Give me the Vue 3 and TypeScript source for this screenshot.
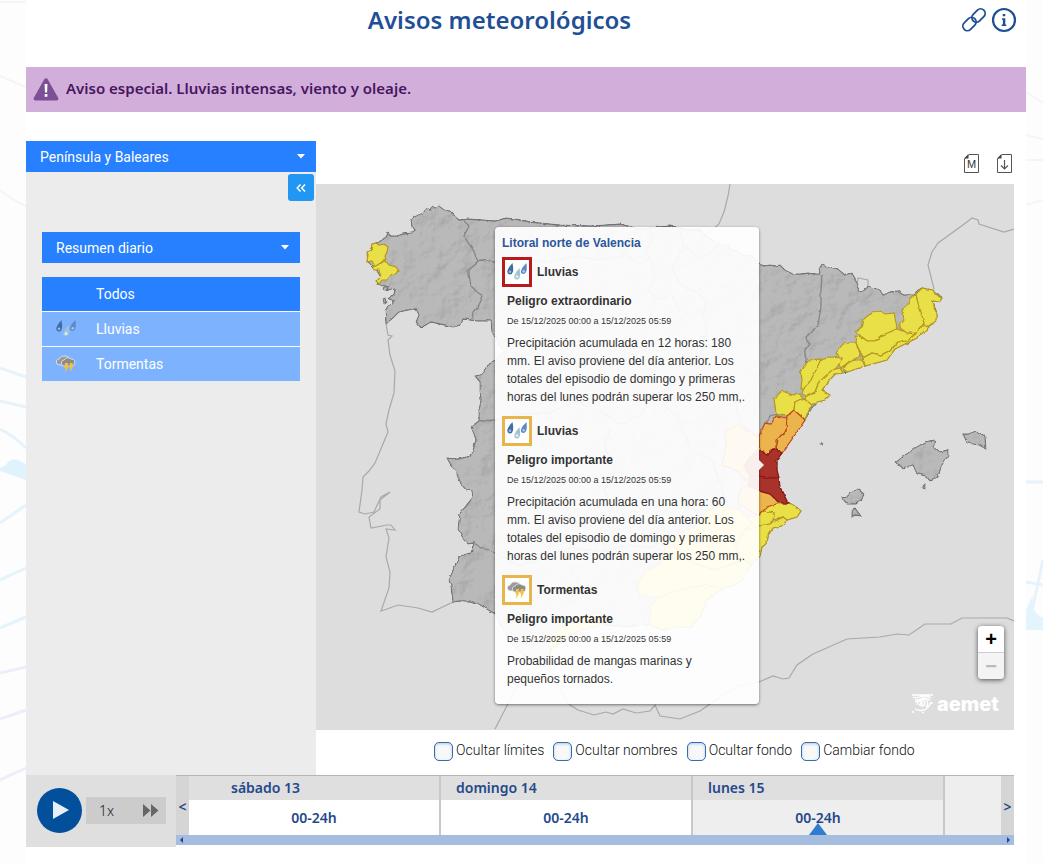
<script setup lang="ts">
import { ref } from 'vue'

interface Warning {
  kind: 'rain' | 'storm'
  name: string
  level: 'red' | 'orange'
  danger: string
  period: string
  text: string
}

interface Zone {
  level: 'yellow' | 'orange' | 'red'
  points: string
}

const area = ref('Península y Baleares')
const summary = ref('Resumen diario')
const selected = ref('Todos')
const hidden = ref<string[]>([])

const phenomena = [
  { name: 'Todos', kind: '' },
  { name: 'Lluvias', kind: 'rain' },
  { name: 'Tormentas', kind: 'storm' },
]

const period = 'De 15/12/2025 00:00 a 15/12/2025 05:59'

const warnings: Warning[] = [
  {
    kind: 'rain',
    name: 'Lluvias',
    level: 'red',
    danger: 'Peligro extraordinario',
    period,
    text: 'Precipitación acumulada en 12 horas: 180 mm. El aviso proviene del día anterior. Los totales del episodio de domingo y primeras horas del lunes podrán superar los 250 mm,.',
  },
  {
    kind: 'rain',
    name: 'Lluvias',
    level: 'orange',
    danger: 'Peligro importante',
    period,
    text: 'Precipitación acumulada en una hora: 60 mm. El aviso proviene del día anterior. Los totales del episodio de domingo y primeras horas del lunes podrán superar los 250 mm,.',
  },
  {
    kind: 'storm',
    name: 'Tormentas',
    level: 'orange',
    danger: 'Peligro importante',
    period,
    text: 'Probabilidad de mangas marinas y pequeños tornados.',
  },
]

const options = ['Ocultar límites', 'Ocultar nombres', 'Ocultar fondo', 'Cambiar fondo']

const days = [
  { name: 'sábado 13', first: true, current: false },
  { name: 'domingo 14', first: false, current: false },
  { name: 'lunes 15', first: false, current: true },
]

const mainland =
  '379,242 383,239 386,237 388,233 391,236 396,236 403,234 411,233 415,230 412,226 411,221 413,218 418,215 423,213 427,208 430,210 432,206 435,208 439,206 443,209 446,210 451,212 455,216 459,220 469,219 483,220 495,221 506,218 516,219 530,222 560,225 590,226 620,224 640,229 670,226 690,230 700,229 706,236 716,242 730,247 745,256 751,255 759,263 764,266 770,265 775,266 780,265 785,270 793,274 800,274 808,273 815,274 820,274 819,269 822,264 830,267 838,269 845,275 852,273 856,280 857,286 860,291 863,290 868,286 874,288 880,290 883,295 890,292 897,291 904,295 913,295 918,290 922,288 933,290 942,297 940,302 933,301 937,313 937,320 928,327 917,338 895,349 887,360 865,366 847,372 835,374 828,382 822,390 830,395 825,400 817,402 812,408 805,420 797,432 782,453 777,460 777,470 780,487 788,503 795,506 801,511 797,517 787,520 785,525 773,528 767,537 766,544 762,547 760,556 752,564 742,580 735,585 723,588 707,600 700,617 690,627 675,627 663,630 650,625 623,627 590,623 570,628 555,645 546,660 535,662 520,653 508,638 500,624 495,614 485,608 477,603 469,601 461,601 453,602 451,587 449,580 453,570 459,557 466,554 471,553 474,543 468,544 464,540 458,529 459,520 460,513 466,506 473,497 472,491 466,490 461,484 458,477 456,470 452,467 447,458 458,459 471,456 474,447 476,440 474,434 471,427 475,424 479,421 479,410 481,400 480,391 480,382 475,376 482,374 487,366 495,361 504,351 498,343 495,337 492,332 491,321 477,321 463,319 461,325 453,327 444,325 431,322 421,328 416,322 419,315 416,309 408,310 399,312 394,317 386,324 385,311 388,306 392,304 394,301 389,299 394,294 395,289 386,292 388,286 384,286 377,284 381,278 377,271 368,262 367,254 370,252 372,244'

const islands = [
  '895,463 905,455 915,448 925,442 933,440 936,442 933,447 939,452 948,450 948,456 942,465 938,476 930,481 926,476 917,474 913,465 903,469 900,465',
  '963,434 968,434 976,431 985,436 986,449 979,445 967,443',
  '842,498 847,497 850,492 858,489 864,494 862,499 856,504 847,504',
  '852,511 855,508 861,516 855,515 852,517',
  '923,486 925,484 925,489 923,488',
  '820,444 821,443 822,445 820,445',
  '383,288 387,286 388,290 384,291',
  '383,299 385,298 386,302 384,304',
]

const borders = [
  '464,221 469,226 464,236 469,244 474,251 478,262 469,270 469,274 471,286 477,292 483,296 479,305 473,312 472,319',
  '478,262 481,260 495,262 520,258 550,262 575,256 600,260 625,255 640,263 650,258',
  '650,228 653,240 645,252 650,258 655,278 648,290 660,300 672,295 680,312',
  '680,229 684,246 700,258 712,252 720,243',
  '684,246 672,268 680,285 695,292 707,300 703,315',
  '471,427 479,421 495,420 520,414 550,412 575,402 600,410 620,425 640,415 655,395 673,385 690,370 702,350 707,330 703,315',
  '474,543 480,547 489,550 495,553 520,566 545,556 570,548 600,552 630,545 655,548',
  '610,428 605,448 615,470 604,490 612,510 600,530 605,550',
  '822,275 821,290 821,307 818,325 811,332 806,337 807,341 810,343 805,350 805,355 807,363',
  '690,370 715,390 735,400 740,422 758,440 770,416 776,414 775,398',
  '655,395 680,420 690,450 712,460 725,500 702,515 680,500 660,515 655,548',
]

const zones: Zone[] = [
  { level: 'yellow', points: '372,244 376,243 379,245 384,244 388,247 387,252 385,256 386,260 379,264 375,267 372,261 367,262 368,255 367,252 371,250' },
  { level: 'yellow', points: '386,261 389,265 396,267 399,271 391,275 387,280 382,280 379,284 376,281 381,275 379,270 374,270 374,267 379,264' },
  { level: 'yellow', points: '916,294 922,288 933,290 935,294 942,297 940,302 933,301 935,310 937,313 937,320 931,325 925,327 921,318 920,310 916,303' },
  { level: 'yellow', points: '902,310 909,304 910,298 916,295 918,303 921,312 924,323 917,333 907,333 900,328 900,322 903,321' },
  { level: 'yellow', points: '872,312 880,311 885,314 894,313 896,322 897,329 890,333 883,335 875,341 867,341 862,337 855,331 862,328 864,319' },
  { level: 'yellow', points: '855,336 862,337 867,341 875,341 883,335 897,329 907,333 915,334 908,341 898,342 891,350 881,355 872,353 863,358 856,343' },
  { level: 'yellow', points: '865,366 863,358 872,353 881,355 891,350 898,342 908,341 915,334 924,324 929,327 917,338 895,349 887,360' },
  { level: 'yellow', points: '836,353 843,344 851,343 856,343 861,356 850,361 841,368 838,363 842,359' },
  { level: 'yellow', points: '842,368 852,360 862,360 865,366 847,372' },
  { level: 'yellow', points: '818,362 828,357 842,358 838,366 828,377 819,382 815,392 807,397 802,393 804,386 812,377' },
  { level: 'yellow', points: '800,371 809,360 821,359 816,370 811,380 805,387 801,389 802,379' },
  { level: 'yellow', points: '805,397 815,392 819,382 832,370 840,368 843,373 835,374 828,382 822,390 830,395 825,400 817,402 811,405 806,401' },
  { level: 'yellow', points: '774,398 782,391 793,395 801,394 801,400 795,402 794,410 787,416 776,414' },
  { level: 'yellow', points: '795,402 803,398 812,405 805,419 794,410' },
  { level: 'yellow', points: '764,511 770,505 788,503 795,506 801,511 797,517 787,520 783,517 773,520 774,513' },
  { level: 'yellow', points: '742,520 759,515 764,511 774,513 773,520 770,524 759,526 745,530' },
  { level: 'yellow', points: '745,530 759,526 770,524 783,517 787,520 785,525 773,528 767,537 766,544 762,547 760,556 752,564 742,560 735,545' },
  { level: 'yellow', points: '668,540 695,526 705,512 722,507 740,510 752,522 745,530 735,545 742,560 715,570 690,562' },
  { level: 'yellow', points: '637,585 645,572 660,565 668,540 690,562 715,570 742,560 752,564 742,580 735,585 723,588 705,585 680,590 658,597 640,596' },
  { level: 'yellow', points: '658,597 680,590 705,585 723,588 707,600 700,617 690,627 675,627 663,630 650,625 650,608' },
  { level: 'yellow', points: '560,627 578,621 595,612 615,620 600,625 575,632 562,642 550,650 548,642' },
  { level: 'orange', points: '759,436 765,423 771,424 776,416 787,418 788,426 784,434 776,440 776,448 770,450 767,456 763,451 759,452' },
  { level: 'orange', points: '794,410 805,420 797,432 790,442 782,453 776,450 778,438 786,432 787,416' },
  { level: 'orange', points: '740,490 752,483 759,491 770,494 776,497 779,503 767,507 759,515 748,510 738,503' },
  { level: 'orange', points: '726,430 738,425 748,432 759,436 759,478 746,480 736,470 722,465 725,450' },
  { level: 'red', points: '752,455 759,448 767,456 773,449 777,450 782,453 777,460 777,470 779,478 765,478 750,476 744,466' },
  { level: 'red', points: '748,478 759,476 770,478 779,478 780,487 788,503 779,503 770,494 759,491 750,486' },
]

const coasts = [
  'M386,324 L388,335 392,336 388,340 390,355 395,371 394,393 389,410 386,424 388,432 375,463 369,471 363,477 362,490 359,512 365,514 374,512 381,497 390,492 380,500 380,509 369,517 371,528 387,525 391,525 395,530 386,529 389,538 386,557 390,572 389,588 381,611 387,609 398,605 418,608 432,612 453,602',
  'M730,184 L728,196 724,212 719,224 705,236',
  'M934,289 L928,265 932,252 938,243 967,222 972,218 978,220 979,224 1004,232 1014,229',
  'M857,286 L858,278 868,280 868,288',
  'M495,729 L515,690 528,670 545,665 560,690 570,705 578,710 594,715 606,712 613,714 623,709 636,713 650,711 655,705 660,716 680,719 700,711 720,697 738,686 759,682 773,676 783,679 789,678 797,665 813,654 847,639 880,637 897,634 909,635 925,624 951,624 962,618 1007,618 1014,621',
]
</script>

<template>
  <div class="page">
    <svg class="backdrop" viewBox="0 0 1043 863" preserveAspectRatio="none" aria-hidden="true">
      <g fill="none" stroke="#f4f5f8" stroke-width="2">
        <path d="M0,2 H26 M0,76 L26,87 M0,190 Q12,200 26,206 M1026,92 L1043,103 M1026,135 L1043,139 M1026,160 H1043 M1026,205 L1043,200" />
      </g>
      <g fill="none" stroke="#e6f3fb" stroke-width="3">
        <path d="M0,368 L26,377 M0,401 L26,407 M0,429 Q14,436 26,448 M0,523 L26,505 M0,580 L26,568 M0,628 L26,617" />
        <path d="M1026,482 H1043 M1026,582 L1043,585 M1043,560 L1030,620" />
      </g>
      <g fill="none" stroke="#eceffa" stroke-width="3">
        <path d="M0,673 L26,667 M0,719 L26,710 M0,780 L26,768" />
      </g>
      <path d="M0,468 L6,465 Q10,458 18,460 L26,464 V480 Q12,475 0,471 Z" fill="#dff3fc" />
      <path d="M1026,610 L1033,595 Q1030,612 1043,618 V630 H1026 Z" fill="#e3f4fc" />
    </svg>

    <div class="content">
      <header class="heading">
        <h1>Avisos meteorológicos</h1>
        <nav class="heading-links">
          <a href="#enlace" aria-label="Enlace permanente">
            <svg width="26" height="26" viewBox="0 0 26 26" fill="none" stroke="#1d4f95" stroke-width="1.8">
              <rect x="-4.5" y="-7.5" width="9" height="15" rx="4.5" transform="translate(8.5 17) rotate(45)" />
              <rect x="-4.5" y="-7.5" width="9" height="15" rx="4.5" transform="translate(17.5 8.5) rotate(45)" />
            </svg>
          </a>
          <a href="#info" aria-label="Información">
            <svg width="26" height="26" viewBox="0 0 26 26">
              <circle cx="13" cy="13" r="11" fill="none" stroke="#1d4f95" stroke-width="2.2" />
              <path d="M11.700 7h2.600v2.300h-2.600zM11 11.200h3.300v6.300h1v1.500h-4.600v-1.500h1.200v-4.800H11z" fill="#1d4f95" />
            </svg>
          </a>
        </nav>
      </header>

      <section class="alert" role="alert">
        <svg width="26" height="23" viewBox="0 0 26 23">
          <path d="M11.300 1.200a2 2 0 0 1 3.400 0L25 19.600a1.800 1.800 0 0 1-1.600 2.900H2.600A1.800 1.800 0 0 1 1 19.600z" fill="#7d4f96" />
          <path d="M11.600 6h2.900l-.4 8.400h-2.100zM11.700 16h2.700v2.700h-2.700z" fill="#fff" />
        </svg>
        <strong>Aviso especial. Lluvias intensas, viento y oleaje.</strong>
      </section>

      <main class="viewer">
        <aside class="sidebar">
          <div class="picker">
            <select v-model="area" aria-label="Zona">
              <option>Península y Baleares</option>
              <option>Canarias</option>
            </select>
            <svg class="caret" width="8" height="5" viewBox="0 0 8 5"><path d="M0 0h8L4 4.500z" fill="#fff" /></svg>
          </div>
          <button class="collapse" type="button" aria-label="Ocultar panel">
            <svg width="10" height="8" viewBox="0 0 10 8" fill="none" stroke="#fff" stroke-width="1.500">
              <path d="M4.500.5L1.200 4l3.300 3.500M9 .5L5.700 4 9 7.500" />
            </svg>
          </button>
          <div class="filters">
            <div class="picker">
              <select v-model="summary" aria-label="Periodo">
                <option>Resumen diario</option>
                <option>Resumen horario</option>
              </select>
              <svg class="caret" width="8" height="5" viewBox="0 0 8 5"><path d="M0 0h8L4 4.500z" fill="#fff" /></svg>
            </div>
            <div class="phenomena">
              <button
                v-for="item in phenomena"
                :key="item.name"
                type="button"
                :class="{ active: item.name === selected }"
                @click="selected = item.name"
              >
                <span class="glyph">
                  <svg v-if="item.kind" width="20" height="18" viewBox="0 0 20 18"><use :href="'#' + item.kind" /></svg>
                </span>
                {{ item.name }}
              </button>
            </div>
          </div>
        </aside>

        <div class="map-column">
          <div class="tools">
            <button type="button" aria-label="Mapa">
              <svg width="16" height="20" viewBox="0 0 16 20">
                <path d="M5 .5h9.500v18H.5V5z" fill="#fff" stroke="#555" />
                <path d="M4.500 0v4.500H0z" fill="#444" />
                <text x="7.500" y="14" text-anchor="middle" class="tool-letter">M</text>
              </svg>
            </button>
            <button type="button" aria-label="Descargar">
              <svg width="16" height="20" viewBox="0 0 16 20" fill="none" stroke="#555">
                <path d="M5 .5h9.500v18H.5V5z" fill="#fff" />
                <path d="M4.500 0v4.500H0z" fill="#444" stroke="none" />
                <path d="M7.500 6v9M4 11.500L7.500 15l3.500-3.500" stroke-width="1.200" />
              </svg>
            </button>
          </div>

          <div class="map">
            <svg class="map-art" viewBox="316 184 698 546" preserveAspectRatio="xMidYMid slice" role="img" aria-label="Mapa de avisos">
              <defs>
                <filter id="relief" x="316" y="184" width="698" height="546" filterUnits="userSpaceOnUse" color-interpolation-filters="sRGB">
                  <feTurbulence type="fractalNoise" baseFrequency="0.045" numOctaves="4" seed="7" result="noise" />
                  <feDiffuseLighting in="noise" surfaceScale="1" diffuseConstant="1.150" lighting-color="#fff" result="light">
                    <feDistantLight azimuth="225" elevation="60" />
                  </feDiffuseLighting>
                  <feBlend in="SourceGraphic" in2="light" mode="multiply" result="shaded" />
                  <feComposite in="shaded" in2="SourceGraphic" operator="in" />
                </filter>
                <filter id="rough" x="316" y="184" width="698" height="546" filterUnits="userSpaceOnUse" color-interpolation-filters="sRGB">
                  <feTurbulence type="fractalNoise" baseFrequency="0.170" numOctaves="2" seed="3" />
                  <feDisplacementMap in="SourceGraphic" scale="3" xChannelSelector="R" yChannelSelector="G" />
                </filter>
                <g id="rain">
                  <path d="M5.500 0Q6.500 5 6 8.500Q5 12 2.500 11.500Q0 11 .3 8Q1.500 4 5.500 0z" fill="#416ca5" />
                  <circle cx="3" cy="8.800" r="1.300" fill="#9dbbd9" />
                  <path d="M12.500 5Q13.500 10 13 13.500Q12 17 9.500 16.500Q7 16 7.300 13Q8.500 9 12.500 5z" fill="#9fc4d6" />
                  <circle cx="10" cy="13.600" r="1.500" fill="#dcecf2" />
                  <path d="M19.500 0Q20 5 19.500 8Q18.500 11.500 16 11Q13.500 10.500 14 7.500Q15.500 3.500 19.500 0z" fill="#5f89c6" />
                  <circle cx="16.700" cy="8.200" r="1.300" fill="#afc8e8" />
                </g>
                <g id="storm">
                  <path d="M1 9Q-1 5 3 4Q5 0 9 1Q14 1 13 6L6 10Q2 10 1 9z" fill="#999a9b" stroke="#eee" stroke-width=".8" />
                  <path d="M6 10Q4 6 8 5Q11 1 15 4Q20 4 18.500 9Q18 11 16 11H8Q6 11 6 10z" fill="#8e8b8b" stroke="#ececec" stroke-width=".8" />
                  <path d="M9 8h3.300l-1 3.500h1.300L9 17.800l.5-5H8.300zM14 8h3l-1 3.500h1.300L13.700 17.500l.5-5H13z" fill="#f2c23b" />
                </g>
              </defs>
              <g fill="none" stroke="#a9a9a9" stroke-width="1.200">
                <path v-for="line in coasts" :key="line" :d="line" />
              </g>
              <g filter="url(#rough)">
                <g filter="url(#relief)" fill="#b9b9b9" stroke="#777" stroke-width="1.300">
                  <polygon :points="mainland" />
                  <polygon v-for="island in islands" :key="island" :points="island" />
                </g>
                <g class="limits">
                  <polyline v-for="border in borders" :key="border" :points="border" />
                </g>
                <polygon v-for="zone in zones" :key="zone.points" :points="zone.points" class="zone" :class="'zone-' + zone.level" />
              </g>
            </svg>

            <article class="popup">
              <h2>Litoral norte de Valencia</h2>
              <section v-for="(warning, index) in warnings" :key="index" class="warning">
                <div class="warning-head">
                  <span class="badge" :class="'badge-' + warning.level">
                    <svg width="20" height="18" viewBox="0 0 20 18"><use :href="'#' + warning.kind" /></svg>
                  </span>
                  <b>{{ warning.name }}</b>
                </div>
                <h3>{{ warning.danger }}</h3>
                <time>{{ warning.period }}</time>
                <p>{{ warning.text }}</p>
              </section>
            </article>

            <div class="zoom">
              <button type="button" aria-label="Acercar">+</button>
              <button type="button" aria-label="Alejar" disabled>−</button>
            </div>

            <div class="brand">
              <svg width="22" height="20" viewBox="0 0 22 20" fill="none" stroke="#fff" stroke-width="1.300">
                <path d="M0 1h21M1 3.500Q6 4 9 2.500Q15 1 19 4M3 6Q8 6 11 4Q16 4 18 7M3 8Q6 8 7 6Q12 4 15 7Q17 10 14 13M5 11Q5 8 8 7Q12 6 13 9Q13 12 10 12Q7 12 7.500 9.500M3 15Q9 18 14 15Q18 12 19 8M0 18h2M10 18.500h2M20 8v2" />
                <circle cx="9.500" cy="9.500" r="1" />
              </svg>
              <span>aemet</span>
            </div>
          </div>

          <div class="options">
            <label v-for="option in options" :key="option">
              <input v-model="hidden" type="checkbox" :value="option" />
              <span>{{ option }}</span>
            </label>
          </div>
        </div>
      </main>

      <section class="timeline">
        <div class="player">
          <button class="play" type="button" aria-label="Reproducir">
            <svg width="16" height="18" viewBox="0 0 16 18"><path d="M0 0l16 9-16 9z" fill="#e6eef6" /></svg>
          </button>
          <button class="speed" type="button">
            <span>1x</span>
            <svg width="16" height="13" viewBox="0 0 16 13"><path d="M0 0l7.500 6.500L0 13zM8 0l7.500 6.500L8 13z" fill="#666" /></svg>
          </button>
        </div>
        <div class="track">
          <div class="days">
            <button class="step" type="button" aria-label="Anterior">&lt;</button>
            <div v-for="day in days" :key="day.name" class="day" :class="{ first: day.first, current: day.current }">
              <h4>{{ day.name }}</h4>
              <button type="button">00-24h</button>
              <svg v-if="day.current" class="marker" width="18" height="12" viewBox="0 0 18 12"><path d="M9 0l9 12H0z" fill="#2f7dcf" /></svg>
            </div>
            <div class="rest"></div>
            <button class="step" type="button" aria-label="Siguiente">&gt;</button>
          </div>
          <div class="scrollbar">
            <svg width="3" height="6" viewBox="0 0 3 6"><path d="M3 0v6L0 3z" fill="#124a98" /></svg>
            <svg width="3" height="6" viewBox="0 0 3 6"><path d="M0 0v6l3-3z" fill="#124a98" /></svg>
          </div>
        </div>
      </section>
    </div>
  </div>
</template>

<style>
body {
  margin: 0;
  background: #fdfdfe;
}
</style>

<style scoped>
.page {
  position: relative;
  min-height: 100vh;
  padding: 0 17px 0 26px;
  box-sizing: border-box;
  overflow: hidden;
  font-family: "Noto Sans", "Open Sans", sans-serif;
  color: #222;
}

.page * {
  box-sizing: border-box;
}

button,
select,
input {
  margin: 0;
  padding: 0;
  border: 0;
  border-radius: 0;
  font: inherit;
  color: inherit;
  background: none;
  appearance: none;
}

svg {
  display: block;
}

.backdrop {
  position: absolute;
  inset: 0;
  width: 100%;
  height: 100%;
}

.content {
  position: relative;
  min-height: 100vh;
  background: #fff;
}

.heading {
  display: grid;
  grid-template-columns: 1fr auto 1fr;
  align-items: center;
  height: 40px;
  padding-right: 9px;
}

h1 {
  grid-column: 2;
  margin: 0;
  padding-right: 44px;
  font-size: 24px;
  line-height: 40px;
  font-weight: 600;
  color: #1f5096;
}

.heading-links {
  display: flex;
  justify-content: flex-end;
  gap: 4px;
}

.alert {
  display: flex;
  align-items: center;
  gap: 7px;
  height: 45px;
  margin-top: 27px;
  padding: 0 7px;
  background: #d2aedb;
  color: #471660;
  font-size: 15px;
}

.alert strong {
  padding-bottom: 4px;
  font-weight: 600;
}

.viewer {
  display: grid;
  grid-template-columns: 290px 1fr;
  margin-top: 29px;
  padding-right: 12px;
}

.sidebar {
  display: flex;
  flex-direction: column;
  background: #ececec;
  color: #fff;
  font-family: "Roboto", sans-serif;
  font-size: 14px;
}

.picker {
  display: grid;
}

.picker select,
.caret {
  grid-area: 1 / 1;
}

.picker select {
  width: 100%;
  height: 31px;
  padding: 0 14px;
  background: #2680ff;
  color: #fff;
}

.caret {
  align-self: center;
  justify-self: end;
  margin-right: 11px;
  pointer-events: none;
}

.collapse {
  display: grid;
  place-items: center;
  align-self: flex-end;
  width: 26px;
  height: 27px;
  margin: 2px 2px 0;
  border-radius: 3px;
  background: #2196f3;
}

.filters {
  padding: 31px 16px 0;
}

.phenomena {
  display: grid;
  gap: 1px;
  margin-top: 14px;
  background: #fff;
}

.phenomena button {
  display: flex;
  align-items: center;
  height: 34px;
  padding: 0 14px;
  background: #7db2ff;
  color: #fff;
}

.phenomena .active {
  background: #2680ff;
}

.glyph {
  width: 40px;
}

.tools {
  display: flex;
  justify-content: flex-end;
  align-items: center;
  gap: 17px;
  height: 43px;
  padding: 2px 1px 0 0;
}

.tool-letter {
  font: 11px "Liberation Sans", sans-serif;
  fill: #333;
}

.map {
  position: relative;
  height: 546px;
  background: #ddd;
}

.map-art {
  width: 100%;
  height: 100%;
}

.limits {
  fill: none;
  stroke: #858585;
  stroke-width: 1.3;
}

.zone {
  stroke-width: 1.2;
}

.zone-yellow {
  fill: #e9e047;
  stroke: #b39722;
}

.zone-orange {
  fill: #ebb44c;
  stroke: #bf481f;
}

.zone-red {
  fill: #a9322b;
  stroke: #861813;
}

.popup {
  position: absolute;
  left: 179px;
  top: 43px;
  width: 264px;
  height: 477px;
  padding: 7px;
  border-radius: 4px;
  background: rgba(255, 255, 255, 0.92);
  box-shadow: 0 1px 3px rgba(0, 0, 0, 0.5);
  font: 12px/18px "Liberation Sans", Arial, sans-serif;
  color: #333;
}

.popup::after {
  content: "";
  position: absolute;
  left: 100%;
  top: 233px;
  border: 5px solid transparent;
  border-left-color: #f5efef;
  border-right-width: 0;
}

.popup h2 {
  margin: 0;
  font-size: 12px;
  line-height: 18px;
  color: #2c569c;
}

.warning {
  margin: 5px 0 10px;
}

.warning + .warning {
  margin-top: 0;
}

.warning-head {
  display: flex;
  align-items: center;
  gap: 5px;
}

.badge {
  display: grid;
  place-items: center;
  width: 30px;
  height: 30px;
  border: 3px solid;
  background: #fff;
}

.badge-red {
  border-color: #b81a1d;
}

.badge-orange {
  border-color: #e8b54a;
}

.warning h3 {
  margin: 5px 5px 0;
  font-size: 12px;
  line-height: 18px;
}

.warning time {
  display: block;
  margin: 5px 5px 0;
  font-size: 9px;
  line-height: 12px;
}

.warning p {
  margin: 7px 5px 0;
}

.zoom {
  position: absolute;
  right: 10px;
  bottom: 51px;
  display: grid;
  width: 26px;
  border-radius: 4px;
  overflow: hidden;
  box-shadow: 0 1px 5px rgba(0, 0, 0, 0.65);
}

.zoom button {
  height: 26px;
  background: #fff;
  font: bold 20px/26px "Liberation Sans", sans-serif;
  color: #000;
}

.zoom button:disabled {
  height: 27px;
  border-top: 1px solid #ccc;
  background: #f4f4f4;
  color: #bbb;
}

.brand {
  position: absolute;
  right: 15px;
  bottom: 14px;
  display: flex;
  align-items: center;
  gap: 3px;
  color: #fff;
  font: 800 20px/24px "Inter", sans-serif;
}

.options {
  display: flex;
  gap: 9px;
  height: 45px;
  padding: 10px 0 0 118px;
  color: #111;
  font-family: "Roboto", sans-serif;
  font-size: 14px;
  font-weight: 300;
  white-space: nowrap;
}

.options label {
  display: flex;
  gap: 3px;
  line-height: 20px;
}

.options input {
  width: 19px;
  height: 19px;
  margin-top: 2px;
  border: 1px solid #2f6cb3;
  border-radius: 5px;
  background: #f8f8f8;
  box-shadow: inset 0 1px 3px #b9c9dc;
}

.options input:checked {
  background: #2680ff;
}

.timeline {
  display: grid;
  grid-template-columns: 150px 1fr;
  align-items: start;
  padding-right: 12px;
}

.player {
  display: flex;
  align-items: center;
  gap: 4px;
  height: 72px;
  padding: 0 10px 2px 11px;
  background: #dfdfdf;
}

.play {
  display: grid;
  place-items: center;
  width: 45px;
  height: 45px;
  padding-left: 2px;
  border-radius: 50%;
  background: #02509c;
}

.speed {
  display: flex;
  flex: 1;
  align-items: center;
  justify-content: space-between;
  height: 27px;
  padding: 0 7px 0 13px;
  background: #ccc;
  color: #222;
  font-size: 14px;
  font-weight: 300;
}

.days {
  display: grid;
  grid-template-columns: 13px 252fr 252fr 252fr 56fr 13px;
  height: 60px;
  border-top: 1px solid #b5b5b5;
  color: #24498a;
  font-size: 14px;
  font-weight: 600;
}

.step {
  padding-top: 2px;
  background: #d5d5d5;
}

.day {
  position: relative;
  display: grid;
  grid-template-rows: 24px 1fr;
  border-right: 2px solid #c8c8c8;
}

.day h4 {
  margin: 0;
  padding-left: 15px;
  background: #dfdfdf;
  font-size: 14px;
  line-height: 24px;
  font-weight: 600;
}

.day.first h4 {
  padding-left: 42px;
}

.day.current,
.rest {
  background: #eee;
}

.marker {
  position: absolute;
  left: calc(50% - 9px);
  bottom: 0;
}

.scrollbar {
  display: flex;
  align-items: center;
  justify-content: space-between;
  height: 10px;
  padding: 0 4px;
  background: #a7bde0;
}
</style>
